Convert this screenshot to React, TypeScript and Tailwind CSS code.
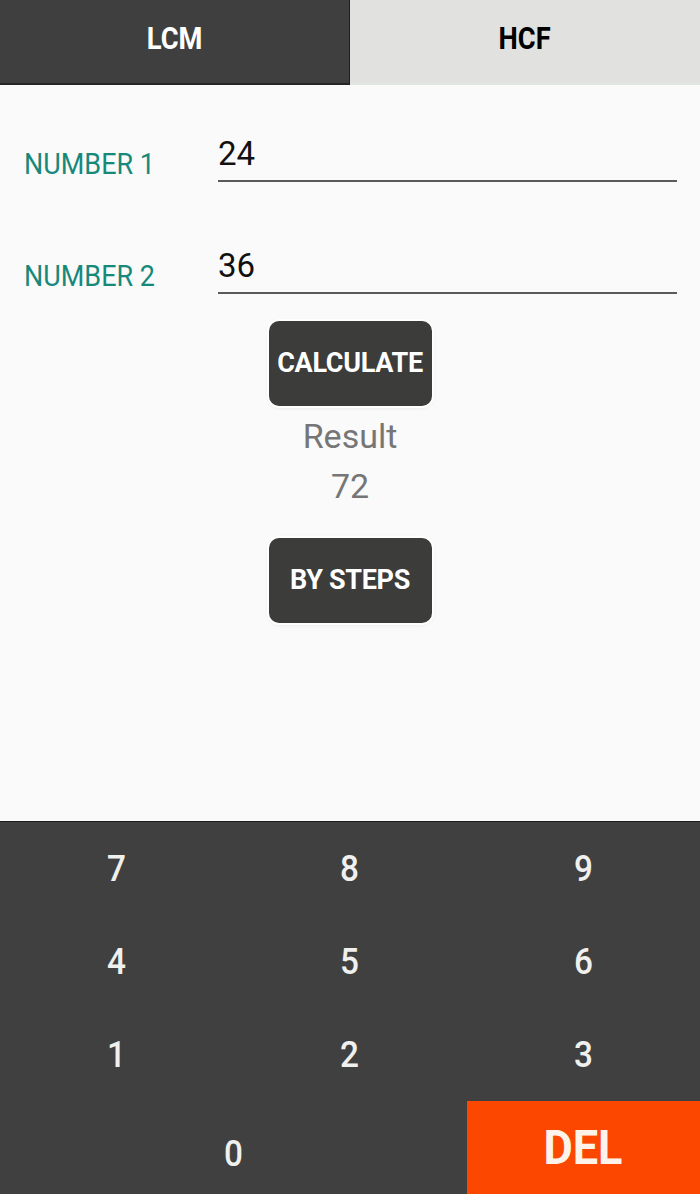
const KEYS = ['7', '8', '9', '4', '5', '6', '1', '2', '3']

function Field({ label, value, top }: { label: string; value: string; top: string }) {
  return (
    <div className={`flex items-start ${top}`}>
      <div className="w-[218px] pl-[24px] mt-[15px] text-[30px] leading-[30px] text-[#17897a]">
        <span className="inline-block origin-left scale-x-[0.9] whitespace-nowrap">{label}</span>
      </div>
      <div className="flex-1 mr-[23px] border-b-2 border-[#5a5a5a] pb-[6px] text-[33px] leading-[40px] text-[#111]">
        {value}
      </div>
    </div>
  )
}

function DarkButton({ label, top }: { label: string; top: string }) {
  return (
    <div className={`mx-auto ${top} w-[163px] h-[85px] rounded-[10px] bg-[#3c3c3a] shadow-[0_0_0_2px_#ffffff,0_1px_4px_rgba(0,0,0,0.15)] flex items-center justify-center`}>
      <span className="text-white text-[27px] font-bold tracking-[-0.3px]">{label}</span>
    </div>
  )
}

export default function App() {
  return (
    <div
      className="w-[700px] h-[1194px] flex flex-col bg-[#fafafa] overflow-hidden"
      style={{ fontFamily: 'Roboto, "Noto Sans", sans-serif' }}
    >
      {/* tabs */}
      <div className="flex h-[85px] shrink-0">
        <div className="w-[350px] bg-[#3f3f3f] border-r border-[#1e1e1e] border-b-2 border-b-[#262626] flex items-center justify-center pb-[4px]">
          <span className="inline-block scale-x-[0.88] text-white text-[31px] font-bold">LCM</span>
        </div>
        <div className="flex-1 bg-[#e1e1df] border-b-2 border-b-[#dfe6e1] flex items-center justify-center pb-[4px]">
          <span className="inline-block scale-x-[0.88] text-black text-[31px] font-bold">HCF</span>
        </div>
      </div>

      {/* form */}
      <div className="flex-1 flex flex-col">
        <Field label="NUMBER 1" value="24" top="mt-[49px]" />
        <Field label="NUMBER 2" value="36" top="mt-[64px]" />

        <DarkButton label="CALCULATE" top="mt-[27px]" />

        <div className="mt-[5px] text-center text-[34px] leading-[50px] text-[#767676]">Result</div>
        <div className="text-center text-[34px] leading-[50px] text-[#767676]">72</div>

        <DarkButton label="BY STEPS" top="mt-[27px]" />
      </div>

      {/* keypad */}
      <div className="h-[373px] shrink-0 bg-[#404040] border-t border-[#1c1c1c] grid grid-cols-3 grid-rows-4">
        {KEYS.map(k => (
          <div key={k} className="flex items-center justify-center">
            <span className="inline-block scale-x-[0.9] text-[#f0f0ee] text-[37px] font-medium">{k}</span>
          </div>
        ))}
        <div className="col-span-2 flex items-center justify-center pt-[12px]">
          <span className="inline-block scale-x-[0.9] text-[#f0f0ee] text-[37px] font-medium">0</span>
        </div>
        <div className="bg-[#fc4700] flex items-center justify-center">
          <span className="inline-block scale-x-[0.92] text-[#fdf3ea] text-[49px] font-bold">DEL</span>
        </div>
      </div>
    </div>
  )
}
